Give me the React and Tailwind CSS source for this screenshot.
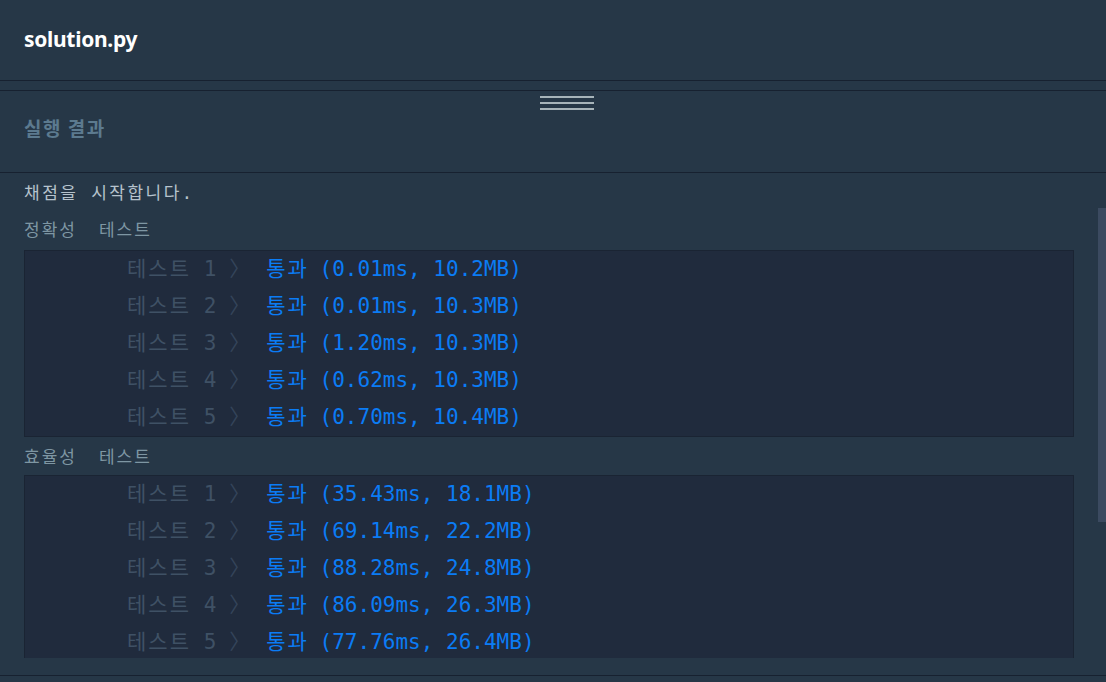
const mono = { fontFamily: '"DejaVu Sans Mono", "Noto Sans CJK KR", monospace' };

const accuracy = [
  ["1", "0.01ms, 10.2MB"],
  ["2", "0.01ms, 10.3MB"],
  ["3", "1.20ms, 10.3MB"],
  ["4", "0.62ms, 10.3MB"],
  ["5", "0.70ms, 10.4MB"],
];

const efficiency = [
  ["1", "35.43ms, 18.1MB"],
  ["2", "69.14ms, 22.2MB"],
  ["3", "88.28ms, 24.8MB"],
  ["4", "86.09ms, 26.3MB"],
  ["5", "77.76ms, 26.4MB"],
];

function ResultBox({ rows }) {
  return (
    <div className="border border-[#1a2433] bg-[#202b3d] text-[21px] leading-[37px]">
      {rows.map(([n, stat]) => (
        <div key={n} className="flex whitespace-pre pl-[102px]">
          <span className="tracking-[2px] text-[#3f5165]">테스트</span>
          <span className="text-[#3f5165]"> {n}</span>
          <span className="ml-[13px] w-[37px] text-[#34445a]">〉</span>
          <span className="tracking-[2px] text-[#0b7cf5]">통과</span>
          <span className="-ml-[2px] text-[#0b7cf5]"> ({stat})</span>
        </div>
      ))}
    </div>
  );
}

export default function App() {
  return (
    <div className="h-[682px] w-[1106px] overflow-hidden bg-[#263747]">
      <div className="flex h-[81px] items-center border-b border-[#172130] px-6" style={{ fontFamily: '"Noto Sans", "Noto Sans CJK KR", sans-serif' }}>
        <h1 className="text-[21px] font-bold tracking-[-0.3px] text-white">solution.py</h1>
      </div>
      <div className="h-[10px] border-b border-[#172130]" />
      <div className="relative flex h-[82px] items-center border-b border-[#172130] px-6 pb-[6px]" style={{ fontFamily: '"Noto Sans CJK KR", sans-serif' }}>
        <div className="absolute left-[540px] top-[5px] flex w-[54px] flex-col gap-[4px]">
          <div className="h-[2px] bg-[#a7b4ba]" />
          <div className="h-[2px] bg-[#a7b4ba]" />
          <div className="h-[2px] bg-[#a7b4ba]" />
        </div>
        <h2 className="text-[19px] font-bold tracking-[1.5px] text-[#5c7a8f]">실행 결과</h2>
      </div>
      <div className="relative h-[485px] overflow-hidden pl-6 pr-8" style={mono}>
        <div className="pt-[7px] text-[17px] leading-[26px] tracking-[2.5px] text-[#b6c3cd]">채점을 시작합니다.</div>
        <div className="mt-[14px] flex text-[17px] leading-[20px] tracking-[2px] text-[#7e96a3]">
          <span>정확성</span>
          <span className="ml-[22px]">테스트</span>
        </div>
        <div className="mt-[10px]">
          <ResultBox rows={accuracy} />
        </div>
        <div className="mt-[9px] flex text-[17px] leading-[22px] tracking-[2px] text-[#7e96a3]">
          <span>효율성</span>
          <span className="ml-[22px]">테스트</span>
        </div>
        <div className="mt-[7px]">
          <ResultBox rows={efficiency} />
        </div>
        <div className="absolute right-0 top-[35px] h-[314px] w-[8px] bg-[#3b4a60]" />
      </div>
      <div className="h-[18px] border-b border-[#172130]" />
    </div>
  );
}
